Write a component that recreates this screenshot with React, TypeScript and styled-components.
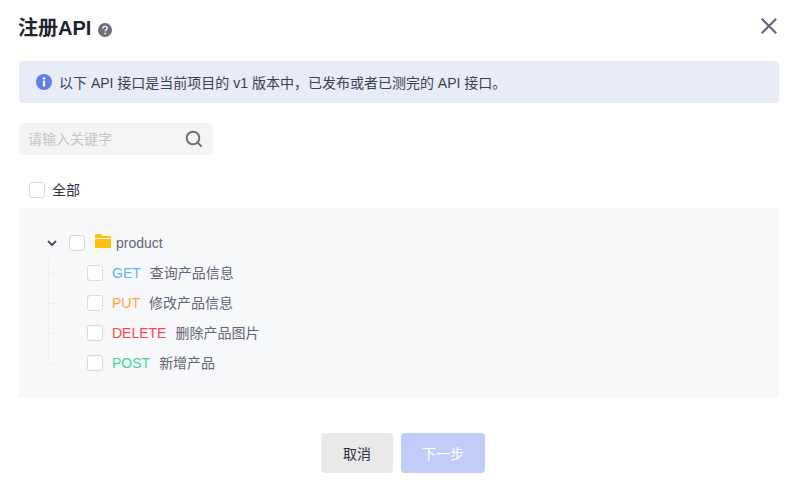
import React from "react";
import styled, { createGlobalStyle } from "styled-components";

const GlobalStyle = createGlobalStyle`
    html, body {
        margin: 0;
        padding: 0;
        background: #fff;
        font-family: "Liberation Sans", "Noto Sans CJK SC", sans-serif;
    }
`;

const apis = [
    { method: "GET", color: "#66b1ff", name: "查询产品信息" },
    { method: "PUT", color: "#ffa63a", name: "修改产品信息" },
    { method: "DELETE", color: "#fb4850", name: "删除产品图片" },
    { method: "POST", color: "#4bd092", name: "新增产品" },
];

export default function App() {
    return (
        <Dialog>
            <GlobalStyle />
            <Header>
                <Title>注册API</Title>
                <HelpIcon viewBox="0 0 14 14">
                    <circle cx="7" cy="7" r="7" fill="#6e7079" />
                    <path d="M4.9 5.5c0-1.3 1-2.1 2.2-2.1s2.1.8 2.1 1.9c0 1.6-2.1 1.6-2.1 3" fill="none" stroke="#fff" strokeWidth="1.4" />
                    <circle cx="7.1" cy="10.4" r=".9" fill="#fff" />
                </HelpIcon>
                <CloseIcon viewBox="0 0 16 16">
                    <path d="M.8.8l14.4 14.4M15.200.8L.8 15.200" stroke="#5f6475" strokeWidth="2" fill="none" />
                </CloseIcon>
            </Header>
            <Alert>
                <InfoIcon viewBox="0 0 16 16">
                    <circle cx="8" cy="8" r="8" fill="#5f7fe6" />
                    <circle cx="8" cy="4.4" r="1.2" fill="#fff" />
                    <rect x="6.9" y="6.6" width="2.2" height="6" rx=".6" fill="#fff" />
                </InfoIcon>
                以下 API 接口是当前项目的 v1 版本中，已发布或者已测完的 API 接口。
            </Alert>
            <Search>
                <SearchInput placeholder="请输入关键字" />
                <SearchIcon viewBox="0 0 18 18">
                    <circle cx="8" cy="8" r="6.3" fill="none" stroke="#6b6f7a" strokeWidth="2" />
                    <path d="M12.6 12.6l4 4" stroke="#6b6f7a" strokeWidth="2" fill="none" />
                </SearchIcon>
            </Search>
            <AllRow>
                <Check />
                <AllLabel>全部</AllLabel>
            </AllRow>
            <Panel>
                <FolderRow>
                    <Chevron viewBox="0 0 10 7">
                        <path d="M1 1l4 4 4-4" stroke="#4f5363" strokeWidth="2" fill="none" />
                    </Chevron>
                    <Check />
                    <FolderIcon viewBox="0 0 16 14">
                        <path d="M0 1a1 1 0 0 1 1-1h5l1.500 2H15a1 1 0 0 1 1 1v1H0z" fill="#fcc10a" />
                        <path d="M0 5h16v8a1 1 0 0 1-1 1H1a1 1 0 0 1-1-1z" fill="#fcc10a" />
                    </FolderIcon>
                    <FolderName>product</FolderName>
                </FolderRow>
                {apis.map((api, i) => (
                    <ApiRow key={api.method}>
                        <Guide last={i === apis.length - 1} />
                        <Check />
                        <Method color={api.color}>{api.method}</Method>
                        <ApiName>{api.name}</ApiName>
                    </ApiRow>
                ))}
            </Panel>
            <Footer>
                <CancelButton>取消</CancelButton>
                <NextButton>下一步</NextButton>
            </Footer>
        </Dialog>
    );
}

const Dialog = styled.div`
    width: 795px;
    height: 482px;
    box-sizing: border-box;
    padding: 14px 16px 0 19px;
    background: #fff;
    overflow: hidden;
`;

const Header = styled.div`
    display: flex;
    align-items: center;
    height: 28px;
`;

const Title = styled.h1`
    margin: 0 0 0 -1px;
    font-size: 20px;
    line-height: 28px;
    font-weight: 700;
    color: #1f2330;
`;

const HelpIcon = styled.svg`
    width: 14px;
    height: 14px;
    margin: 3px 0 0 7px;
`;

const CloseIcon = styled.svg`
    width: 16px;
    height: 16px;
    margin: -4px 2px 0 auto;
`;

const Alert = styled.div`
    display: flex;
    align-items: center;
    width: 760px;
    height: 42px;
    margin-top: 19px;
    padding-left: 17px;
    box-sizing: border-box;
    background: #e8ebf8;
    border-radius: 4px;
    font-size: 14px;
    color: #3c4050;
    white-space: pre;
`;

const InfoIcon = styled.svg`
    width: 16px;
    height: 16px;
    margin-right: 7px;
`;

const Search = styled.div`
    display: flex;
    align-items: center;
    width: 194px;
    height: 32px;
    margin-top: 20px;
    padding: 0 10px 0 9px;
    box-sizing: border-box;
    background: #f4f4f5;
    border-radius: 4px;
`;

const SearchInput = styled.input`
    flex: 1;
    min-width: 0;
    border: 0;
    outline: 0;
    padding: 0;
    background: transparent;
    font: 14px "Liberation Sans", "Noto Sans CJK SC", sans-serif;

    &::placeholder {
        color: #c4c5c9;
    }
`;

const SearchIcon = styled.svg`
    width: 18px;
    height: 18px;
    margin-left: -1px;
`;

const AllRow = styled.div`
    display: flex;
    align-items: center;
    height: 36px;
    margin-top: 17px;
    padding-left: 10px;
`;

const AllLabel = styled.span`
    margin-left: 7px;
    font-size: 14px;
    line-height: 20px;
    color: #2c3040;
`;

const Check = styled.span`
    flex: none;
    width: 14px;
    height: 14px;
    background: #fff;
    border: 1px solid #d8d9dd;
    border-radius: 3px;
`;

const Panel = styled.div`
    width: 760px;
    height: 190px;
    box-sizing: border-box;
    padding-top: 20px;
    background: #f7f8fa;
`;

const FolderRow = styled.div`
    display: flex;
    align-items: center;
    height: 30px;
    padding-left: 28px;
`;

const Chevron = styled.svg`
    width: 10px;
    height: 7px;
    margin-right: 12px;
`;

const FolderIcon = styled.svg`
    width: 16px;
    height: 14px;
    margin: -4px 0 0 10px;
`;

const FolderName = styled.span`
    margin-left: 5px;
    font-size: 14px;
    color: #626575;
`;

const ApiRow = styled.div`
    display: flex;
    align-items: center;
    height: 30px;
    padding-left: 29px;
`;

const Guide = styled.span<{ last: boolean }>`
    flex: none;
    align-self: stretch;
    width: 39px;
    background-image: linear-gradient(#eeeff2, #eeeff2), linear-gradient(#eeeff2, #eeeff2);
    background-repeat: no-repeat;
    background-size: 1px ${(props) => (props.last ? "50%" : "100%")}, 8px 1px;
    background-position: 0 0, 0 50%;
`;

const Method = styled.span<{ color: string }>`
    margin-left: 9px;
    font-size: 14px;
    color: ${(props) => props.color};
`;

const ApiName = styled.span`
    margin-left: 9px;
    font-size: 14px;
    line-height: 20px;
    margin-top: -1px;
    color: #626575;
`;

const Footer = styled.div`
    display: flex;
    justify-content: center;
    gap: 8px;
    width: 760px;
    margin-top: 35px;
    padding-left: 8px;
    box-sizing: border-box;
`;

const CancelButton = styled.button`
    width: 72px;
    height: 40px;
    padding: 0;
    border: 0;
    border-radius: 4px;
    background: #e9e9ea;
    color: #2c3040;
    font: 14px "Liberation Sans", "Noto Sans CJK SC", sans-serif;
`;

const NextButton = styled(CancelButton)`
    width: 84px;
    background: #bfcdf8;
    color: #fff;
`;
